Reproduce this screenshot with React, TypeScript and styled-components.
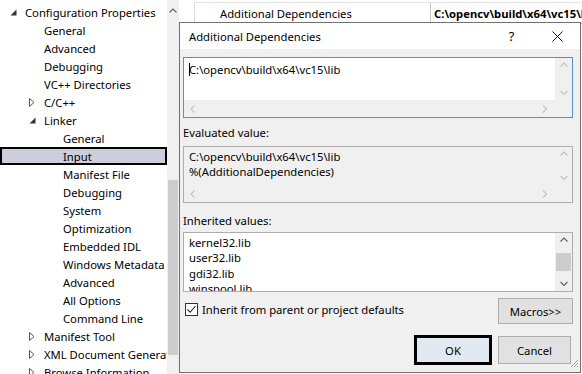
import React from "react";
import styled, { createGlobalStyle } from "styled-components";

const Global = createGlobalStyle`
  html, body { margin: 0; padding: 0; background: #fff; overflow: hidden; }
  body { font-family: "Noto Sans", "Segoe UI", sans-serif; font-size: 11.25px; color: #000; }
`;

const Screen = styled.div`
  position: relative;
  width: 582px;
  height: 374px;
  display: flex;
  overflow: hidden;
  background: #fff;
`;

const Tree = styled.div`
  width: 167px;
  flex: none;
  padding-top: 3px;
  display: flex;
  flex-direction: column;
`;

const Row = styled.div<{ $level: number; $selected?: boolean }>`
  flex: none;
  height: 18px;
  box-sizing: border-box;
  display: flex;
  align-items: center;
  padding-left: ${(p) => (p.$selected ? 8 : 10) + p.$level * 19}px;
  white-space: nowrap;
  overflow: hidden;
  background: ${(p) => (p.$selected ? "#cccedb" : "transparent")};
  border: ${(p) => (p.$selected ? "2px solid #000" : "none")};
`;

const Arrow = styled.span`
  width: 15px;
  flex: none;
  display: flex;
  align-items: center;
`;

const SideScroll = styled.div`
  width: 12px;
  flex: none;
  background: #f0f0f0;
  display: flex;
  flex-direction: column;
  align-items: center;
`;

const SideArrowCell = styled.div`
  height: 22px;
  display: flex;
  align-items: center;
  justify-content: center;
`;

const SideThumb = styled.div`
  margin-top: 158px;
  width: 10px;
  height: 175px;
  background: #cdcdcd;
`;

const Grid = styled.div`
  flex: 1;
  display: flex;
  flex-direction: column;
  padding-left: 15px;
`;

const GridRow = styled.div`
  margin-top: 2px;
  height: 20px;
  display: flex;
  border-left: 1px solid #dadada;
  border-top: 1px solid #e3e3e3;
  border-bottom: 1px solid #aaa;
  white-space: nowrap;
  overflow: hidden;
`;

const GridName = styled.div`
  width: 236px;
  flex: none;
  padding-left: 25px;
  box-sizing: border-box;
  border-right: 1px solid #c8c8c8;
  display: flex;
  align-items: center;
`;

const GridValue = styled.div`
  padding-left: 3px;
  font-weight: 700;
  display: flex;
  align-items: center;
`;

const Dialog = styled.div`
  position: absolute;
  left: 179px;
  top: 22px;
  width: 402px;
  height: 351px;
  box-sizing: border-box;
  border: 1px solid #707070;
  background: #f0f0f0;
  display: flex;
  flex-direction: column;
`;

const TitleBar = styled.div`
  height: 26px;
  flex: none;
  background: #fff;
  display: flex;
  align-items: center;
  padding-left: 9px;
`;

const TitleText = styled.div`
  flex: 1;
`;

const TitleButton = styled.div<{ $w: number }>`
  width: ${(p) => p.$w}px;
  height: 26px;
  display: flex;
  align-items: center;
  justify-content: center;
  font-size: 13px;
`;

const Body = styled.div`
  flex: 1;
  display: flex;
  flex-direction: column;
  padding: 8px 7px 0 3px;
  position: relative;
`;

const Box = styled.div<{ $h: number; $border: string; $bg: string; $mt?: number }>`
  flex: none;
  height: ${(p) => p.$h}px;
  margin-top: ${(p) => p.$mt || 0}px;
  box-sizing: border-box;
  border: 1px solid ${(p) => p.$border};
  background: ${(p) => p.$bg};
  display: grid;
  grid-template-columns: 1fr 17px;
  grid-template-rows: 1fr auto;
  overflow: hidden;
`;

const BoxText = styled.div<{ $pt: number; $lh: number }>`
  padding: ${(p) => p.$pt}px 0 0 5px;
  line-height: ${(p) => p.$lh}px;
  white-space: pre;
  overflow: hidden;
`;

const Caret = styled.span`
  display: inline-block;
  width: 1px;
  height: 13px;
  background: #000;
  vertical-align: -2px;
  margin-right: -1px;
`;

const VBar = styled.div`
  background: #f0f0f0;
  display: flex;
  flex-direction: column;
  align-items: center;
  justify-content: space-between;
  padding: 4px 0;
`;

const HBar = styled.div`
  grid-column: 1 / 3;
  height: 17px;
  background: #f0f0f0;
  display: flex;
  align-items: center;
  justify-content: space-between;
  padding: 0 24px 0 6px;
`;

const Thumb = styled.div`
  width: 15px;
  height: 18px;
  background: #cdcdcd;
`;

const Label = styled.div<{ $mt: number }>`
  flex: none;
  margin-top: ${(p) => p.$mt}px;
  height: 15px;
  line-height: 15px;
`;

const CheckRow = styled.div`
  flex: none;
  margin-top: 6px;
  display: flex;
  align-items: flex-start;
`;

const CheckLabel = styled.div`
  flex: 1;
  display: flex;
  align-items: center;
  gap: 4px;
  padding-left: 2px;
  padding-top: 4px;
  line-height: 15px;
`;

const CheckBox = styled.div`
  width: 13px;
  height: 13px;
  box-sizing: border-box;
  border: 1px solid #333;
  background: #fff;
  display: flex;
  align-items: center;
  justify-content: center;
`;

const Button = styled.div<{ $w: number; $h: number; $default?: boolean }>`
  width: ${(p) => p.$w}px;
  height: ${(p) => p.$h}px;
  box-sizing: border-box;
  border: ${(p) => (p.$default ? "3px solid #000" : "1px solid #adadad")};
  background: ${(p) => (p.$default ? "#e1eaf3" : "#e1e1e1")};
  display: flex;
  align-items: center;
  justify-content: center;
`;

const ButtonRow = styled.div`
  flex: none;
  margin-top: 11px;
  display: flex;
  justify-content: flex-end;
  align-items: center;
  gap: 6px;
  padding-right: 2px;
`;

const Grip = styled.div`
  position: absolute;
  right: 1px;
  bottom: 1px;
`;

const Chevron = ({ dir, color }: { dir: "up" | "down" | "left" | "right"; color: string }) => {
  const d =
    dir === "up" ? "M0.5 4.5 L4 1 L7.5 4.5" :
    dir === "down" ? "M0.5 1 L4 4.5 L7.5 1" :
    dir === "left" ? "M4.5 0.5 L1 4 L4.5 7.5" : "M1 0.5 L4.5 4 L1 7.5";
  const horiz = dir === "up" || dir === "down";
  return (
    <svg width={horiz ? 8 : 6} height={horiz ? 6 : 8} viewBox={horiz ? "0 0 8 6" : "0 0 6 8"}>
      <path d={d} fill="none" stroke={color} strokeWidth="1.1" />
    </svg>
  );
};

const Expanded = () => (
  <svg width="7" height="7" viewBox="0 0 7 7">
    <path d="M0.5 6.5 L6.5 6.5 L6.5 0.5 Z" fill="#333" />
  </svg>
);
const Collapsed = () => (
  <svg width="6" height="9" viewBox="0 0 6 9">
    <path d="M0.5 0.5 L5 4.5 L0.5 8.5 Z" fill="none" stroke="#555" strokeWidth="1" />
  </svg>
);

type Item = { t: string; l: number; a?: "e" | "c"; s?: boolean };
const items: Item[] = [
  { t: "Configuration Properties", l: 0, a: "e" },
  { t: "General", l: 1 },
  { t: "Advanced", l: 1 },
  { t: "Debugging", l: 1 },
  { t: "VC++ Directories", l: 1 },
  { t: "C/C++", l: 1, a: "c" },
  { t: "Linker", l: 1, a: "e" },
  { t: "General", l: 2 },
  { t: "Input", l: 2, s: true },
  { t: "Manifest File", l: 2 },
  { t: "Debugging", l: 2 },
  { t: "System", l: 2 },
  { t: "Optimization", l: 2 },
  { t: "Embedded IDL", l: 2 },
  { t: "Windows Metadata", l: 2 },
  { t: "Advanced", l: 2 },
  { t: "All Options", l: 2 },
  { t: "Command Line", l: 2 },
  { t: "Manifest Tool", l: 1, a: "c" },
  { t: "XML Document Generator", l: 1, a: "c" },
  { t: "Browse Information", l: 1, a: "c" },
];

export default function App() {
  const dis = "#c2c2c2";
  return (
    <Screen>
      <Global />
      <Tree>
        {items.map((it, i) => (
          <Row key={i} $level={it.l} $selected={it.s}>
            <Arrow>{it.a === "e" ? <Expanded /> : it.a === "c" ? <Collapsed /> : null}</Arrow>
            {it.t}
          </Row>
        ))}
      </Tree>
      <SideScroll>
        <SideArrowCell>
          <Chevron dir="up" color="#606060" />
        </SideArrowCell>
        <SideThumb />
      </SideScroll>
      <Grid>
        <GridRow>
          <GridName>Additional Dependencies</GridName>
          <GridValue>C:\opencv\build\x64\vc15\lib;%(AdditionalDependencies)</GridValue>
        </GridRow>
      </Grid>

      <Dialog>
        <TitleBar>
          <TitleText>Additional Dependencies</TitleText>
          <TitleButton $w={45}>?</TitleButton>
          <TitleButton $w={46}>
            <svg width="11" height="11" viewBox="0 0 11 11">
              <path d="M0.5 0.5 L10.5 10.5 M10.5 0.5 L0.5 10.5" stroke="#111" strokeWidth="1" />
            </svg>
          </TitleButton>
        </TitleBar>
        <Body>
          <Box $h={61} $border="#5b8fc1" $bg="#fff">
            <BoxText $pt={4} $lh={15}>
              <Caret />
              {"C:\\opencv\\build\\x64\\vc15\\lib"}
            </BoxText>
            <VBar>
              <Chevron dir="up" color={dis} />
              <Chevron dir="down" color={dis} />
            </VBar>
            <HBar>
              <Chevron dir="left" color={dis} />
              <Chevron dir="right" color={dis} />
            </HBar>
          </Box>
          <Label $mt={7}>Evaluated value:</Label>
          <Box $h={57} $border="#adadad" $bg="#f0f0f0" $mt={6}>
            <BoxText $pt={2} $lh={15}>
              {"C:\\opencv\\build\\x64\\vc15\\lib\n%(AdditionalDependencies)"}
            </BoxText>
            <VBar>
              <Chevron dir="up" color={dis} />
              <Chevron dir="down" color={dis} />
            </VBar>
            <HBar>
              <Chevron dir="left" color={dis} />
              <Chevron dir="right" color={dis} />
            </HBar>
          </Box>
          <Label $mt={10}>Inherited values:</Label>
          <Box $h={60} $border="#adadad" $bg="#fff" $mt={4}>
            <BoxText $pt={2} $lh={15.3}>
              {"kernel32.lib\nuser32.lib\ngdi32.lib\nwinspool.lib"}
            </BoxText>
            <VBar>
              <Chevron dir="up" color="#606060" />
              <Thumb />
              <Chevron dir="down" color="#606060" />
            </VBar>
          </Box>
          <CheckRow>
            <CheckLabel>
              <CheckBox>
                <svg width="11" height="11" viewBox="0 0 11 11">
                  <path d="M1.5 5.5 L4.2 8.3 L9.5 2" fill="none" stroke="#222" strokeWidth="1.1" />
                </svg>
              </CheckBox>
              Inherit from parent or project defaults
            </CheckLabel>
            <Button $w={75} $h={26}>Macros&gt;&gt;</Button>
          </CheckRow>
          <ButtonRow>
            <Button $w={78} $h={30} $default>OK</Button>
            <Button $w={73} $h={28}>Cancel</Button>
          </ButtonRow>
          <Grip>
            <svg width="10" height="10" viewBox="0 0 10 10">
              <path d="M9 2 L2 9 M9 5 L5 9 M9 8 L8 9" stroke="#a0a0a0" strokeWidth="1" />
            </svg>
          </Grip>
        </Body>
      </Dialog>
    </Screen>
  );
}
